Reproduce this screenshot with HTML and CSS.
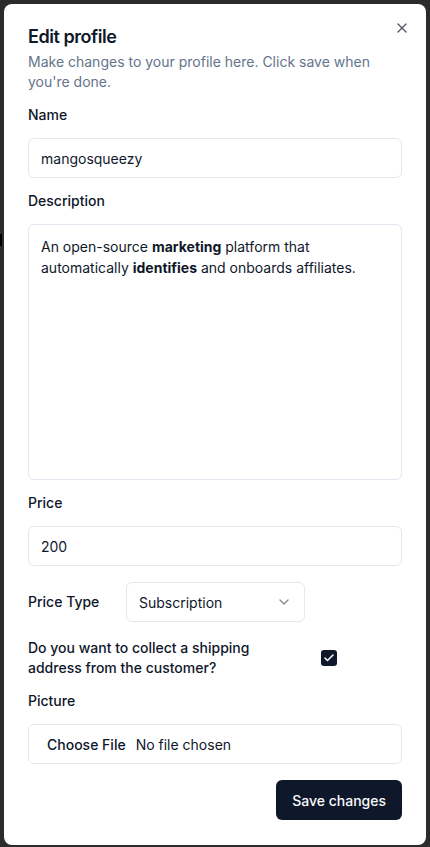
FILE: index.html
```html
<!DOCTYPE html>
<html lang="en">
<head>
<meta charset="utf-8">
<title>Edit profile</title>
<link rel="stylesheet" href="styles.css">
</head>
<body>
<div class="underlay-mark"></div>
<div class="dialog">
  <button class="close" aria-label="Close">
    <svg width="16" height="16" viewBox="0 0 24 24" fill="none" stroke="currentColor" stroke-width="2" stroke-linecap="round" stroke-linejoin="round"><path d="M18 6 6 18"/><path d="m6 6 12 12"/></svg>
  </button>
  <div class="header">
    <h2 class="title">Edit profile</h2>
    <p class="subtitle">Make changes to your profile here. Click save when you're done.</p>
  </div>
  <div class="field">
    <label class="label">Name</label>
    <div class="input">mangosqueezy</div>
  </div>
  <div class="field">
    <label class="label">Description</label>
    <div class="textarea">An open-source <b>marketing</b> platform that automatically <b>identifies</b> and onboards affiliates.</div>
  </div>
  <div class="field">
    <label class="label">Price</label>
    <div class="input">200</div>
  </div>
  <div class="row price-type">
    <label class="label">Price Type</label>
    <div class="select">
      <span>Subscription</span>
      <svg class="chev" width="16" height="16" viewBox="0 0 24 24" fill="none" stroke="currentColor" stroke-width="2" stroke-linecap="round" stroke-linejoin="round"><path d="m6 9 6 6 6-6"/></svg>
    </div>
  </div>
  <div class="row shipping">
    <label class="label ship-text">Do you want to collect a shipping address from the customer?</label>
    <span class="checkbox">
      <svg width="12" height="12" viewBox="0 0 24 24" fill="none" stroke="currentColor" stroke-width="3" stroke-linecap="round" stroke-linejoin="round"><path d="M20 6 9 17l-5-5"/></svg>
    </span>
  </div>
  <div class="field">
    <label class="label">Picture</label>
    <div class="input file"><span class="file-btn">Choose File</span><span>No file chosen</span></div>
  </div>
  <div class="footer">
    <button class="save">Save changes</button>
  </div>
</div>
</body>
</html>
```
FILE: styles.css
```css
* { box-sizing: border-box; }
html, body { margin: 0; padding: 0; }
body {
  background: #2b2b2b;
  font-family: Inter, "Noto Sans", sans-serif;
  color: #0f172a;
  height: 847px;
  overflow: hidden;
  padding: 4px 4px 0 4px;
}
.underlay-mark {
  position: absolute;
  left: 0;
  top: 234px;
  width: 2px;
  height: 12px;
  background: #000;
}
.dialog {
  position: relative;
  background: #fff;
  width: 422px;
  height: 841px;
  border-radius: 8px;
  padding: 19px 24px 24px 24px;
  display: flex;
  flex-direction: column;
}
.close {
  position: absolute;
  right: 16px;
  top: 16px;
  width: 16px;
  height: 16px;
  padding: 0;
  border: 0;
  background: none;
  color: #0f172a;
  opacity: 0.7;
  display: flex;
}
.header { margin-bottom: 13px; }
.title {
  margin: 0;
  font-size: 18px;
  line-height: 28px;
  font-weight: 600;
  letter-spacing: -0.025em;
}
.subtitle {
  margin: 1px 0 0 0;
  font-size: 14px;
  line-height: 20px;
  color: #64748b;
  padding-right: 30px;
}
.field {
  display: flex;
  flex-direction: column;
  gap: 13px;
  margin-bottom: 13px;
}
.label {
  font-size: 14px;
  line-height: 20px;
  font-weight: 500;
}
.input {
  height: 40px;
  border: 1px solid #e2e8f0;
  border-radius: 6px;
  padding: 0 12px;
  display: flex;
  align-items: center;
  font-size: 14px;
}
.textarea {
  height: 256px;
  border: 1px solid #e2e8f0;
  border-radius: 6px;
  padding: 11px 12px;
  font-size: 14px;
  line-height: 21px;
}
.textarea b { font-weight: 700; }
.row {
  display: flex;
  align-items: center;
}
.price-type { margin-top: 3px; }
.price-type .label { width: 98px; }
.select {
  width: 179px;
  height: 40px;
  border: 1px solid #e2e8f0;
  border-radius: 6px;
  padding: 0 12px;
  display: flex;
  align-items: center;
  justify-content: space-between;
  font-size: 14px;
}
.chev { color: #0f172a; opacity: 0.5; }
.shipping { margin-top: 16px; margin-bottom: 13px; }
.ship-text { width: 293px; padding-right: 20px; }
.checkbox {
  width: 16px;
  height: 16px;
  border-radius: 3px;
  background: #0f172a;
  color: #fff;
  display: flex;
  align-items: center;
  justify-content: center;
}
.file { padding-left: 12px; }
.file-btn {
  padding: 1px 6px;
  margin-right: 4px;
  font-weight: 500;
}
.footer {
  display: flex;
  justify-content: flex-end;
  margin-top: 3px;
}
.save {
  height: 40px;
  padding: 0 16px;
  border: 0;
  border-radius: 6px;
  background: #0f172a;
  color: #f8fafc;
  font-family: inherit;
  font-size: 14px;
  font-weight: 500;
}
```
